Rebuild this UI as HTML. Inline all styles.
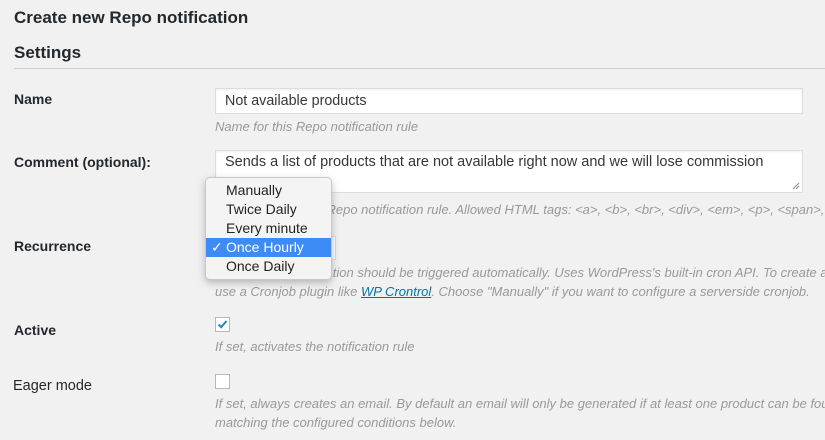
<!DOCTYPE html>
<html><head><meta charset="utf-8"><style>
html,body{overflow:hidden}
body{margin:0;width:825px;height:440px;background:#f1f1f1;font-family:"Liberation Sans",sans-serif;color:#23282d;position:relative;overflow:hidden}
h1{position:absolute;margin:0;left:14px;top:8px;font-size:17px;font-weight:bold;color:#23282d}
h2{position:absolute;margin:0;left:14px;top:43px;font-size:17px;font-weight:bold;color:#23282d}
.hr{position:absolute;left:14px;right:0;top:68px;border-top:1px solid #ccc}
.l{position:absolute;left:14px;font-size:14px;font-weight:bold}
.h{position:absolute;left:215px;right:0;overflow:hidden;font-size:13px;font-style:italic;color:#999;white-space:nowrap;line-height:19px}
.in{position:absolute;left:215px;width:588px;background:#fff;border:1px solid #ddd;box-shadow:inset 0 1px 2px rgba(0,0,0,.07);font-size:14.5px;box-sizing:border-box;padding:4px 9px;color:#32373c;white-space:nowrap}
.cb{position:absolute;left:215px;width:15px;height:15px;background:#fff;border:1px solid #b4b9be;box-sizing:border-box}
.dd{position:absolute;left:205px;top:177px;width:127px;height:103px;background:#f4f4f4;border:1px solid #c8c8c8;border-radius:5px;box-shadow:0 3px 8px rgba(0,0,0,.25);box-sizing:border-box;padding-top:3px;font-size:14px;color:#222}
.dd div{height:19px;line-height:19px;padding-left:20px;position:relative}
.dd .s{background:#3d8bf6;color:#fff}
</style></head><body>
<h1>Create new Repo notification</h1>
<h2>Settings</h2>
<div class="hr"></div>

<div class="l" style="top:91px">Name</div>
<div class="in" style="top:88px;height:26px;font-size:14.3px">Not available products</div>
<div class="h" style="top:117px">Name for this Repo notification rule</div>

<div class="l" style="top:154px">Comment (optional):</div>
<div class="in" style="top:150px;height:43px;padding-top:3px">Sends a list of products that are not available right now and we will lose commission
<svg width="8" height="8" style="position:absolute;right:2px;bottom:2px"><path d="M1 7L7 1M4 7L7 4" stroke="#888" stroke-width="1"/></svg></div>
<div class="h" style="top:200px">A comment for this Repo notification rule. Allowed HTML tags: &lt;a&gt;, &lt;b&gt;, &lt;br&gt;, &lt;div&gt;, &lt;em&gt;, &lt;p&gt;, &lt;span&gt;, &lt;strong&gt;</div>

<div class="l" style="top:238px">Recurrence</div>
<div style="position:absolute;left:300px;top:236px;width:34px;height:22px;background:#fff;border:1px solid #ddd"></div>
<div class="h" style="top:263px">Whether this notification should be triggered automatically. Uses WordPress's built-in cron API. To create a real cron job</div>
<div class="h" style="top:282px">use a Cronjob plugin like <span style="color:#0073aa;text-decoration:underline">WP Crontrol</span>. Choose "Manually" if you want to configure a serverside cronjob.</div>

<div class="l" style="top:322px">Active</div>
<div class="cb" style="top:317px"><svg width="13" height="13" viewBox="0 0 13 13" style="position:absolute;left:0;top:0"><path d="M2.5 6.5 L5.2 9.2 L10.5 3" stroke="#1e8cbe" stroke-width="2" fill="none"/></svg></div>
<div class="h" style="top:337px">If set, activates the notification rule</div>

<div class="l" style="top:378px;left:13px;font-weight:normal;font-size:14.5px">Eager mode</div>
<div class="cb" style="top:374px"></div>
<div class="h" style="top:394px">If set, always creates an email. By default an email will only be generated if at least one product can be found</div>
<div class="h" style="top:413px">matching the configured conditions below.</div>

<div class="dd">
<div>Manually</div>
<div>Twice Daily</div>
<div>Every minute</div>
<div class="s"><span style="position:absolute;left:5px">✓</span>Once Hourly</div>
<div>Once Daily</div>
</div>
</body></html>
